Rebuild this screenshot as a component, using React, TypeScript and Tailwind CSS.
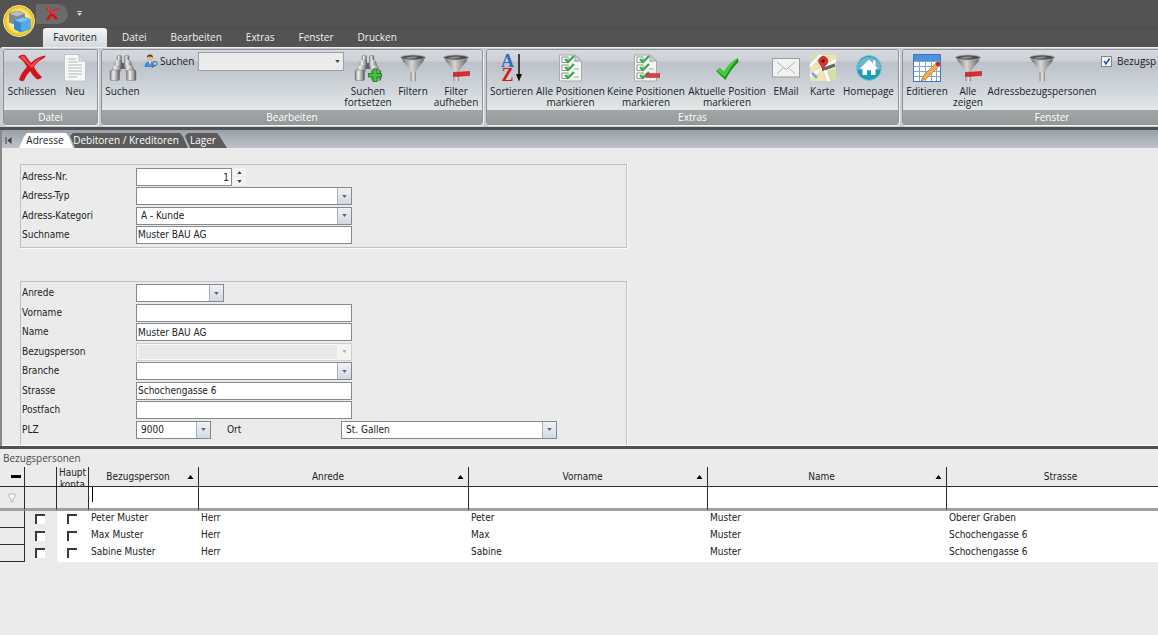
import { useState } from "react";
import type { ReactNode } from "react";

const ribbonTabs = ["Datei", "Bearbeiten", "Extras", "Fenster", "Drucken"];

const persons = [
  { person: "Peter Muster", anrede: "Herr", vorname: "Peter", name: "Muster", strasse: "Oberer Graben" },
  { person: "Max Muster", anrede: "Herr", vorname: "Max", name: "Muster", strasse: "Schochengasse 6" },
  { person: "Sabine Muster", anrede: "Herr", vorname: "Sabine", name: "Muster", strasse: "Schochengasse 6" },
];

// ---------- icons ----------

function RedCross({ className }: { className: string }) {
  return (
    <svg viewBox="0 0 28 28" className={className}>
      <path d="M0 3Q3 0 7 1Q10 5 13 9Q18 3 27.500 1.500Q28 2.500 26 4Q20 7 16 12.500Q18 18 24 23Q22 26 18.500 25Q14 21 12 17Q8 21 6 26.500Q3 28 1 25.500Q3 19 9 13Q6 7 0 3Z" fill="#d3141a" />
      <path d="M2 3Q5 1.500 6.500 2.500Q9 7 13 11Q19 5 25 2.500Q18 8 14 14Q8 8 2 3Z" fill="#ee5055" />
    </svg>
  );
}

function PageIcon() {
  return (
    <svg viewBox="0 0 28 28" className="size-7">
      <path d="M3.500 .5H18L24.500 7V27H3.500Z" fill="#f7f8f8" stroke="#c3c6c8" />
      <path d="M18 .5V7H24.500Z" fill="#dde0e1" stroke="#b9bcbf" />
      <path d="M7 5H15M7 8H17M7 11H21M7 14H21M7 17H21M7 20H21M7 23H16" stroke="#b3b6b8" />
    </svg>
  );
}

function Binoculars({ plus = false }: { plus?: boolean }) {
  return (
    <svg viewBox="0 0 28 28" className="size-7">
      <defs>
        <linearGradient id="metal">
          <stop offset="0" stopColor="#7b7b7b" />
          <stop offset=".35" stopColor="#f0f0f0" />
          <stop offset=".75" stopColor="#9a9a9a" />
          <stop offset="1" stopColor="#575757" />
        </linearGradient>
      </defs>
      <path d="M11 9H17V15H11Z" fill="#606060" />
      <rect x="8" y="1.500" width="4.500" height="6" rx="1" fill="url(#metal)" stroke="#777" strokeWidth=".4" />
      <rect x="15.500" y="1.500" width="4.500" height="6" rx="1" fill="url(#metal)" stroke="#777" strokeWidth=".4" />
      <path d="M6 7.500Q6 6 8 6H13V12H5Z" fill="url(#metal)" />
      <path d="M15 6H20Q22 6 22 7.500L23 12H15Z" fill="url(#metal)" />
      <path d="M4 11.500H13L11 19H2Z" fill="url(#metal)" />
      <path d="M15 11.500H24L26 19H17Z" fill="url(#metal)" />
      <rect x="1" y="16" width="9.500" height="10.500" rx="1.500" fill="url(#metal)" stroke="#666" strokeWidth=".4" />
      <rect x="17.500" y="16" width="9.500" height="10.500" rx="1.500" fill="url(#metal)" stroke="#666" strokeWidth=".4" />
      {plus && <path d="M19 15H23V19.500H27.500V23H23V27.500H19V23H14.500V19.500H19Z" fill="#41c341" stroke="#158a15" />}
    </svg>
  );
}

function Funnel({ minus = false }: { minus?: boolean }) {
  return (
    <svg viewBox="0 0 28 28" className="size-7">
      <defs>
        <linearGradient id="funnel">
          <stop offset="0" stopColor="#6a6a6a" />
          <stop offset=".45" stopColor="#d6d6d6" />
          <stop offset="1" stopColor="#606060" />
        </linearGradient>
        <linearGradient id="stem">
          <stop offset="0" stopColor="#8b8b8b" />
          <stop offset=".5" stopColor="#e8e8e8" />
          <stop offset="1" stopColor="#858585" />
        </linearGradient>
      </defs>
      <path d="M11.500 16H17V27Q14 28 11.500 27Z" fill="url(#stem)" />
      <path d="M2 3Q3 7 7 11Q10 14 11.500 18H17Q18 14 21.500 11Q25.500 7 26 3Z" fill="url(#funnel)" />
      <ellipse cx="14" cy="3.500" rx="12.300" ry="2.600" fill="#4f4f4f" stroke="#b5b5b5" strokeWidth=".8" />
      <path d="M5 4Q12 1.500 19 3Q14 6 5 4Z" fill="#8e8e8e" />
      {minus && <path d="M11.500 18.500L27.500 17.500V21.500L11.500 22.500Z" fill="#dc2b31" stroke="#b8161c" strokeWidth=".6" />}
    </svg>
  );
}

function SortIcon() {
  return (
    <span className="flex h-7 w-7 justify-center gap-[2px] overflow-visible font-['Liberation_Serif',serif] text-[18px] leading-[14px] font-bold">
      <span className="flex flex-col items-center">
        <span className="text-[#2f6fc0]">A</span>
        <span className="text-[#cf1f26]">Z</span>
      </span>
      <svg viewBox="0 0 6 28" className="h-7 w-[6px] flex-none">
        <path d="M3 0V22" stroke="#111" strokeWidth="1.500" />
        <path d="M0 20H6L3 27.500Z" fill="#111" />
      </svg>
    </span>
  );
}

function ChecklistIcon({ minus = false }: { minus?: boolean }) {
  return (
    <svg viewBox="0 0 28 28" className="size-7">
      <path d="M2.500 1H18L24.500 7V27H2.500Z" fill="#f3f5f4" stroke="#a9adab" />
      <path d="M18 1V7H24.500Z" fill="#cfd2d0" stroke="#8e9290" strokeWidth=".7" />
      {[3, 11, 19].map((y) => (
        <g key={y}>
          <rect x="5" y={y} width="6" height="5.500" fill="#fff" stroke="#7b807d" strokeWidth=".8" />
          <path d={`M8 ${y + 2} L11 ${y + 5} L17 ${y - 1}`} fill="none" stroke="#2fae3c" strokeWidth="2.200" />
          <path d={`M17 ${y + 4}H22`} stroke="#a8adaa" />
        </g>
      ))}
      {minus && <path d="M14 19.500H28V23.500H14Z" fill="#dd3f49" stroke="#b72630" strokeWidth=".5" />}
    </svg>
  );
}

function CheckIcon() {
  return (
    <svg viewBox="0 0 28 28" className="size-7">
      <path d="M3 17L7 14L11 18Q16 9 25 4L25.500 8Q18 15 12.500 26Q8 22 3 17Z" fill="#1a961a" />
      <path d="M11 18.500Q16 9 25 4Q18 12 12 23L4 17L7 14.500Z" fill="#3fd036" />
    </svg>
  );
}

function MailIcon() {
  return (
    <svg viewBox="0 0 28 28" className="size-7">
      <rect x=".5" y="4.500" width="27" height="18.500" fill="#f2f2f2" stroke="#9c9c9c" />
      <path d="M5 8L14 15.500L23 8M5 20L11 14M23 20L17 14" fill="none" stroke="#b1b1b1" />
    </svg>
  );
}

function MapIcon() {
  return (
    <svg viewBox="0 0 28 28" className="size-7">
      <rect x="1" y="1" width="26" height="26" fill="#eee4b4" />
      <path d="M1 1H9V8L1 12ZM17 18L27 14V27H19Z" fill="#d3dfa9" />
      <path d="M1 22L27 6M10 1L20 27M1 12L12 1" stroke="#fff" strokeWidth="2.500" />
      <path d="M3 19L8 24" stroke="#79a9d4" strokeWidth="2.500" />
      <path d="M15 15L26 11" stroke="#5d6670" strokeWidth="3" />
      <path d="M14 17Q13 12 10.500 9.500A4.500 4.500 0 1 1 18 9.500Q15 12 14 17Z" fill="#df332e" stroke="#8e1815" strokeWidth=".7" />
      <circle cx="14.200" cy="7" r="1.700" fill="#5f0d0d" />
    </svg>
  );
}

function HomeIcon() {
  return (
    <svg viewBox="0 0 28 28" className="size-7">
      <circle cx="14" cy="14" r="12.500" fill="#1c9fb4" stroke="#8ec5d0" />
      <path d="M2 15A12 12 0 0 1 26 15Q14 19 2 15Z" fill="#6fb4cc" />
      <path d="M14 5.500L23 14.500H20.500V21H16V16H12V21H7.500V14.500H5Z" fill="#fff" />
      <path d="M18 6.500H20.500V12L18 9Z" fill="#fff" />
    </svg>
  );
}

function EditGridIcon() {
  return (
    <svg viewBox="0 0 28 28" className="size-7">
      <rect x=".5" y=".5" width="27" height="27" fill="#fff" stroke="#3c78c3" />
      <rect x="1" y="1" width="26" height="6" fill="#4f91dd" />
      <path d="M1 7.500H27M1 12.500H27M1 17.500H27M1 22.500H27M6.500 7V27M12.500 7V27M18.500 7V27M23.500 7V27" stroke="#7ba7dc" />
      <path d="M8 27L10 22L23 9L26 12L13 25Z" fill="#f0ad48" stroke="#b8742a" strokeWidth=".7" />
      <circle cx="25" cy="10" r="2.200" fill="#cf2430" />
    </svg>
  );
}

function UserSearchIcon() {
  return (
    <svg viewBox="0 0 14 14" className="size-[14px]">
      <circle cx="6" cy="4" r="2.800" fill="#e6b58c" />
      <path d="M3 3.500Q3 .5 6 .5T9 3.500Q6 1.500 3 3.500Z" fill="#5b3a22" />
      <path d="M.5 13Q.5 7.500 6 7.500T10.500 13Z" fill="#3b8bd8" />
      <path d="M5 7.500H7L6 11Z" fill="#fff" />
      <circle cx="11" cy="9.500" r="2.200" fill="#a9c4d8" stroke="#5d6a75" />
      <path d="M10 11L8 13.500" stroke="#5d6a75" strokeWidth="1.300" />
    </svg>
  );
}

function AppOrb() {
  return (
    <svg viewBox="0 0 34 34" className="size-[34px]">
      <defs>
        <radialGradient id="orb" cx=".5" cy=".5">
          <stop offset="0" stopColor="#fffbe0" />
          <stop offset=".65" stopColor="#fbe97e" />
          <stop offset=".88" stopColor="#efc921" />
          <stop offset="1" stopColor="#c99a10" />
        </radialGradient>
      </defs>
      <circle cx="17" cy="17" r="15.500" fill="url(#orb)" stroke="#f5ecb8" />
      <path d="M7 10Q7 9 8 8.500L14 7Q16 6.500 18 7.200L22 9Q23 9.500 23 10.500V17L14 21L8 19Q7 18.500 7 17.500Z" fill="#85888a" />
      <path d="M7.500 9.500L15 7L22.500 9.500L15 12.500Z" fill="#b9bcbe" />
      <path d="M12 17Q12 15.500 13.500 15L20 13Q22 12.500 24 13.500L27 14.500Q28.500 15 28.500 16.500V23.500Q28.500 25 27 25.500L20 28Q19 28.500 18 28L13.500 26Q12 25.500 12 24Z" fill="#3489d0" />
      <path d="M12.500 16L21 13.200L28 15.500L19 18.500Z" fill="#83c3f0" />
      <path d="M19 18.500L28.500 15.500V23.500Q28.500 25 27 25.500L19 28.200Z" fill="#56a8e4" />
    </svg>
  );
}

function Triangle({ className }: { className: string }) {
  return (
    <svg viewBox="0 0 6 4" className={className}>
      <path d="M0 0H6L3 4Z" fill="currentColor" />
    </svg>
  );
}

// ---------- ribbon ----------

function RibbonGroup({ title, className, children }: { title: string; className: string; children: ReactNode }) {
  return (
    <section
      className={`flex h-[76px] flex-none flex-col overflow-hidden rounded-[3px] border border-[#8f9399] shadow-[1px_1px_0_#f2f4f5] ${className}`}
    >
      <div className="flex flex-1 items-start bg-[linear-gradient(#d6d9de_0,#cdd0d6_11px,#bcc1ca_12px,#cdd3d8_36px,#e2e7e7_100%)] px-px pt-1">
        {children}
      </div>
      <h2 className="h-[14px] bg-linear-to-b from-[#a3a6a7] to-[#959998] text-center text-[10px] leading-[14px] font-medium text-white">
        {title}
      </h2>
    </section>
  );
}

function RibbonButton({ label, icon, className }: { label: string; icon: ReactNode; className: string }) {
  return (
    <button className={`flex flex-none flex-col items-center gap-1 ${className}`}>
      {icon}
      <span className="text-center leading-[11px] whitespace-pre">{label}</span>
    </button>
  );
}

function Ribbon() {
  const [showPersons, setShowPersons] = useState(true);
  return (
    <div className="flex gap-[3px] overflow-hidden rounded-tl-[3px] border-t border-[#eceef0] bg-[#c9ccd1] pt-px pb-[2px] pl-[3px] text-[10px] font-medium text-[#1c1c28]">
      <RibbonGroup title="Datei" className="w-[95px]">
        <RibbonButton label="Schliessen" icon={<RedCross className="size-7" />} className="w-[54px]" />
        <RibbonButton label="Neu" icon={<PageIcon />} className="w-8" />
      </RibbonGroup>
      <RibbonGroup title="Bearbeiten" className="w-[382px]">
        <RibbonButton label="Suchen" icon={<Binoculars />} className="w-[39px]" />
        <label className="flex w-[202px] flex-none items-start gap-[2px] pl-[2px]">
          <UserSearchIcon />
          <span className="leading-[14px]">Suchen</span>
          <span className="relative -mt-[2px] ml-[2px] flex flex-1">
            <select className="h-[19px] w-full appearance-none border border-[#9ba0a5] bg-[#ebebeb]">
              <option></option>
            </select>
            <Triangle className="pointer-events-none absolute top-2 right-[4px] h-[3px] w-[5px] text-[#444]" />
          </span>
        </label>
        <RibbonButton label={"Suchen\nfortsetzen"} icon={<Binoculars plus />} className="w-12" />
        <RibbonButton label="Filtern" icon={<Funnel />} className="w-[42px]" />
        <RibbonButton label={"Filter\naufheben"} icon={<Funnel minus />} className="w-11" />
      </RibbonGroup>
      <RibbonGroup title="Extras" className="w-[413px]">
        <RibbonButton label="Sortieren" icon={<SortIcon />} className="w-[47px]" />
        <RibbonButton label={"Alle Positionen\nmarkieren"} icon={<ChecklistIcon />} className="w-[71px]" />
        <RibbonButton label={"Keine Positionen\nmarkieren"} icon={<ChecklistIcon minus />} className="w-[80px]" />
        <RibbonButton label={"Aktuelle Position\nmarkieren"} icon={<CheckIcon />} className="w-[82px]" />
        <RibbonButton label="EMail" icon={<MailIcon />} className="w-9" />
        <RibbonButton label="Karte" icon={<MapIcon />} className="w-[37px]" />
        <RibbonButton label="Homepage" icon={<HomeIcon />} className="w-[55px]" />
      </RibbonGroup>
      <RibbonGroup title="Fenster" className="w-[300px]">
        <RibbonButton label="Editieren" icon={<EditGridIcon />} className="w-[46px]" />
        <RibbonButton label={"Alle\nzeigen"} icon={<Funnel minus />} className="w-9" />
        <RibbonButton label="Adressbezugspersonen" icon={<Funnel />} className="w-[112px]" />
        <label className="flex items-center gap-[5px] pl-[3px] leading-[14px]">
          <span className="relative flex">
            <input
              type="checkbox"
              checked={showPersons}
              onChange={(e) => setShowPersons(e.target.checked)}
              className="size-[11px] appearance-none border border-[#7d8794] bg-[#f4f6f8]"
            />
            {showPersons && (
              <svg viewBox="0 0 11 11" className="pointer-events-none absolute inset-0 size-[11px]">
                <path d="M3 5L5 8L8.500 2.500" fill="none" stroke="#2c4c9c" strokeWidth="1.500" />
              </svg>
            )}
          </span>
          Bezugsp
        </label>
      </RibbonGroup>
    </div>
  );
}

// ---------- form ----------

function Row({ id, label, children }: { id: string; label: string; children: ReactNode }) {
  return (
    <div className="flex h-[18px] items-start">
      <label htmlFor={id} className="w-[114px] flex-none leading-[17px]">
        {label}
      </label>
      {children}
    </div>
  );
}

function TextField({ id, value = "" }: { id: string; value?: string }) {
  return <input id={id} type="text" defaultValue={value} className="h-[18px] w-[216px] border border-[#85888c] bg-white px-px outline-none" />;
}

function Combo({ id, value = "", className, disabled = false }: { id: string; value?: string; className: string; disabled?: boolean }) {
  return (
    <span className={`relative flex flex-none ${className}`}>
      <select
        id={id}
        disabled={disabled}
        defaultValue={value}
        className="h-[18px] w-full appearance-none border border-[#85888c] bg-white pr-4 pl-1 opacity-100 outline-none disabled:border-[#cfcfca] disabled:bg-[#e9e9e9] disabled:shadow-[inset_0_0_0_1px_#f8f8f8]"
      >
        <option>{value}</option>
      </select>
      <span
        className={
          disabled
            ? "pointer-events-none absolute top-px right-px flex h-4 w-[14px] items-center justify-center bg-[#f3f3f3] text-[#b5b5b5]"
            : "pointer-events-none absolute top-px right-px flex h-4 w-[14px] items-center justify-center border-l border-[#a9b0bb] bg-linear-to-b from-[#f0f2f6] to-[#d3d9e4] text-[#5d6470]"
        }
      >
        <Triangle className="h-[3px] w-[5px]" />
      </span>
    </span>
  );
}

function AddressForm() {
  const [nr, setNr] = useState(1);
  return (
    <form className="h-[298px] flex-none overflow-hidden border-b border-white bg-[#ebebeb] pt-4 pl-[18px]">
      <div className="flex h-[84px] w-[607px] flex-col justify-between border border-[#bcc3c8] py-[3px] pl-px shadow-[1px_1px_0_#fafafa]">
        <Row id="nr" label="Adress-Nr.">
          <input
            id="nr"
            type="number"
            value={nr}
            onChange={(e) => setNr(Number(e.target.value))}
            className="h-[18px] w-24 [appearance:textfield] border border-[#85888c] bg-white px-[2px] text-right outline-none [&::-webkit-inner-spin-button]:appearance-none"
          />
          <span className="ml-px flex flex-col gap-px text-[#444]">
            <button type="button" aria-label="Erhöhen" onClick={() => setNr(nr + 1)} className="flex h-2 w-[13px] items-center justify-center bg-[#f4f4f4]">
              <Triangle className="h-[3px] w-[5px] rotate-180" />
            </button>
            <button type="button" aria-label="Verringern" onClick={() => setNr(nr - 1)} className="flex h-2 w-[13px] items-center justify-center bg-[#f4f4f4]">
              <Triangle className="h-[3px] w-[5px]" />
            </button>
          </span>
        </Row>
        <Row id="typ" label="Adress-Typ">
          <Combo id="typ" className="w-[216px]" />
        </Row>
        <Row id="kategorie" label="Adress-Kategori">
          <Combo id="kategorie" value="A - Kunde" className="w-[216px]" />
        </Row>
        <Row id="suchname" label="Suchname">
          <TextField id="suchname" value="Muster BAU AG" />
        </Row>
      </div>

      <div className="mt-[33px] flex h-[170px] w-[607px] flex-col justify-between border border-[#bcc3c8] pt-[2px] pb-[11px] pl-px shadow-[1px_1px_0_#fafafa]">
        <Row id="anrede" label="Anrede">
          <Combo id="anrede" className="w-[88px]" />
        </Row>
        <Row id="vorname" label="Vorname">
          <TextField id="vorname" />
        </Row>
        <Row id="name" label="Name">
          <TextField id="name" value="Muster BAU AG" />
        </Row>
        <Row id="bezugsperson" label="Bezugsperson">
          <Combo id="bezugsperson" className="w-[216px]" disabled />
        </Row>
        <Row id="branche" label="Branche">
          <Combo id="branche" className="w-[216px]" />
        </Row>
        <Row id="strasse" label="Strasse">
          <TextField id="strasse" value="Schochengasse 6" />
        </Row>
        <Row id="postfach" label="Postfach">
          <TextField id="postfach" />
        </Row>
        <Row id="plz" label="PLZ">
          <Combo id="plz" value="9000" className="w-[75px]" />
          <label htmlFor="ort" className="ml-4 w-[114px] leading-[17px]">
            Ort
          </label>
          <Combo id="ort" value="St. Gallen" className="w-[216px]" />
        </Row>
      </div>
    </form>
  );
}

// ---------- grid ----------

function HeaderCell({ label, sorted = false }: { label: string; sorted?: boolean }) {
  return (
    <th className="border-r border-b border-[#2b2b2b] p-0 font-normal">
      <div className="flex items-center pr-1">
        <span className="flex-1 text-center">{label}</span>
        <Triangle className={sorted ? "h-1 w-[7px] rotate-180 text-black" : "invisible h-1 w-[7px]"} />
      </div>
    </th>
  );
}

function GridCheckbox({ label }: { label: string }) {
  return (
    <input
      type="checkbox"
      aria-label={label}
      className="mt-[3px] ml-[2px] block size-[10px] appearance-none border-t-2 border-l-2 border-[#3a3a3a] bg-white checked:bg-[#777]"
    />
  );
}

function PersonGrid() {
  return (
    <section className="overflow-hidden bg-[#ebebeb]">
      <h2 className="h-[18px] pl-[3px] font-['Open_Sans',sans-serif] leading-[18px] text-[#4a4a4a]">Bezugspersonen</h2>
      <table className="w-full min-w-[1186px] table-fixed border-separate border-spacing-0 text-left">
        <colgroup>
          <col className="w-[25px]" />
          <col className="w-8" />
          <col className="w-8" />
          <col className="w-[110px]" />
          <col className="w-[270px]" />
          <col className="w-[239px]" />
          <col className="w-[239px]" />
          <col />
        </colgroup>
        <thead>
          <tr className="h-5">
            <th className="border-r border-b border-[#2b2b2b] p-0">
              <div className="ml-[11px] h-[3px] w-[10px] bg-black"></div>
            </th>
            <th className="border-r border-b border-[#2b2b2b] p-0"></th>
            <th className="border-r border-b border-[#2b2b2b] p-0 font-normal">
              <div className="h-[19px] overflow-hidden text-center leading-[12px]">
                Haupt
                <br />
                konta
              </div>
            </th>
            <HeaderCell label="Bezugsperson" sorted />
            <HeaderCell label="Anrede" sorted />
            <HeaderCell label="Vorname" sorted />
            <HeaderCell label="Name" sorted />
            <HeaderCell label="Strasse" />
          </tr>
        </thead>
        <tbody>
          <tr className="h-6">
            <td className="border-r border-b-3 border-r-[#2b2b2b] border-b-[#a0a0a0] p-0">
              <svg viewBox="0 0 8 10" className="ml-2 h-[10px] w-2">
                <path d="M1 1H7V4L5 6V9H3V6L1 4Z" fill="#f6f6f6" stroke="#bbb" />
              </svg>
            </td>
            <td className="border-r border-b-3 border-r-[#2b2b2b] border-b-[#a0a0a0] p-0"></td>
            <td className="border-r border-b-3 border-r-[#2b2b2b] border-b-[#a0a0a0] p-0"></td>
            <td className="border-r border-b-3 border-r-[#2b2b2b] border-b-[#a0a0a0] bg-white p-0 pl-[3px] align-top">
              <div className="h-[15px] border-l border-black">
                <input aria-label="Bezugsperson filtern" className="block h-[15px] w-full outline-none" />
              </div>
            </td>
            {["Anrede", "Vorname", "Name", "Strasse"].map((col) => (
              <td key={col} className="border-r border-b-3 border-r-[#2b2b2b] border-b-[#a0a0a0] bg-white p-0">
                <input aria-label={`${col} filtern`} className="block h-[15px] w-full px-[3px] outline-none" />
              </td>
            ))}
          </tr>
          {persons.map((p) => (
            <tr key={p.person} className="h-[17px] leading-[14px] [&>td]:p-0 [&>td]:align-top">
              <td className="border-r border-b border-[#2b2b2b]"></td>
              <td className="pl-2!">
                <GridCheckbox label={`${p.person} auswählen`} />
              </td>
              <td className="bg-white pl-2!">
                <GridCheckbox label={`${p.person} Hauptkontakt`} />
              </td>
              <td className="bg-white pl-[2px]!">{p.person}</td>
              <td className="bg-white pl-[2px]!">{p.anrede}</td>
              <td className="bg-white pl-[2px]!">{p.vorname}</td>
              <td className="bg-white pl-[2px]!">{p.name}</td>
              <td className="bg-white pl-[2px]!">{p.strasse}</td>
            </tr>
          ))}
        </tbody>
      </table>
    </section>
  );
}

export default function App() {
  return (
    <div className="flex min-h-screen flex-col overflow-hidden bg-[#ebebeb] font-['DejaVu_Sans_Condensed','DejaVu_Sans',sans-serif] text-[10px] text-[#222]">
      <header className="relative bg-[#535353] font-['Open_Sans',sans-serif]">
        <div className="flex h-7 items-start gap-[9px] border-b border-[#4b4b4b] pt-1 pl-9">
          <div className="flex h-5 w-8 items-center rounded-r-full bg-[#6b6b6b] pl-[10px]">
            <button aria-label="Schliessen">
              <RedCross className="block size-[14px]" />
            </button>
          </div>
          <button aria-label="Anpassen" className="mt-[7px] flex flex-col items-center gap-px text-[#d8d8d8]">
            <span className="h-px w-[5px] bg-[#d8d8d8]"></span>
            <Triangle className="h-[3px] w-[5px]" />
          </button>
        </div>
        <button aria-label="Menü" className="absolute top-1 left-[2px]">
          <AppOrb />
        </button>
        <nav className="flex h-[19px] items-stretch pl-[43px] font-medium">
          <button className="w-16 rounded-t-[3px] bg-linear-to-b from-[#f3f4f5] to-[#d6d9dd] text-[#222]">Favoriten</button>
          <div className="ml-[15px] flex gap-6 text-[#f0f0f0]">
            {ribbonTabs.map((tab) => (
              <button key={tab}>{tab}</button>
            ))}
          </div>
        </nav>
        <Ribbon />
      </header>

      <main className="flex flex-col border-t-3 border-[#505050]">
        <div className="border-l-2 border-[#8a8a8a]">
          <nav className="flex h-[18px] items-end bg-linear-to-b from-[#99a0aa] to-[#bfc4ca] font-['Open_Sans',sans-serif] leading-[15px] font-medium">
            <button aria-label="Erster" className="mr-[7px] ml-[3px] flex h-[15px] items-center">
              <svg viewBox="0 0 7 7" className="size-[7px]">
                <path d="M1 0V7" stroke="#3c3f44" />
                <path d="M6.500 0V7L2.500 3.500Z" fill="#3c3f44" />
              </svg>
            </button>
            <button className="z-10 h-[15px] w-[54px] bg-white pr-[2px] text-[#222] [clip-path:polygon(0_100%,5px_25%,8px_0,47px_0,50px_25%,100%_100%)]">
              Adresse
            </button>
            <button className="-ml-[3px] h-[15px] w-[118px] bg-[#5b5b5b] pr-[6px] text-white [clip-path:polygon(0_20%,3px_0,110px_0,113px_25%,100%_100%,5px_100%)]">
              Debitoren / Kreditoren
            </button>
            <button className="-ml-[3px] h-[15px] w-[42px] bg-[#5b5b5b] pr-[6px] text-white [clip-path:polygon(0_20%,3px_0,32px_0,35px_25%,100%_100%,5px_100%)]">
              Lager
            </button>
          </nav>
          <AddressForm />
        </div>
        <div className="h-[3px] bg-[#505050]"></div>
        <PersonGrid />
      </main>
    </div>
  );
}
